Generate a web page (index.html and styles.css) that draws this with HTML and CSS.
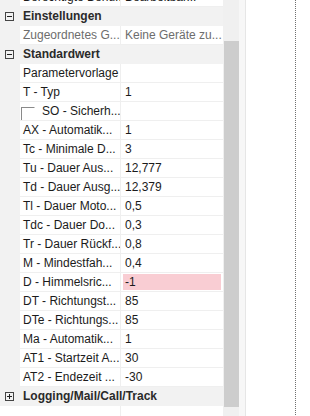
FILE: index.html
```html
<!DOCTYPE html>
<html lang="de">
<head>
  <meta charset="UTF-8" />
  <title>Eigenschaften</title>
  <link rel="stylesheet" href="styles.css">
</head>
<body>
  <div class="window">
    <div class="grid">
      <div class="row">
        <div class="gutter"></div>
        <div class="name">Berechtigte Benu...</div>
        <div class="value">Bearbeitbar...</div>
      </div>

      <div class="category">
        <div class="gutter">
          <svg class="toggle" width="9" height="9" viewBox="0 0 9 9"><rect x="0.5" y="0.5" width="8" height="8" fill="none" stroke="#444"/><path d="M2 4.5h5" stroke="#222"/></svg>
        </div>
        <div class="title">Einstellungen</div>
      </div>
      <div class="row readonly">
        <div class="gutter"></div>
        <div class="name">Zugeordnetes G...</div>
        <div class="value">Keine Geräte zu...</div>
      </div>

      <div class="category">
        <div class="gutter">
          <svg class="toggle" width="9" height="9" viewBox="0 0 9 9"><rect x="0.5" y="0.5" width="8" height="8" fill="none" stroke="#444"/><path d="M2 4.5h5" stroke="#222"/></svg>
        </div>
        <div class="title">Standardwert</div>
      </div>
      <div class="row"><div class="gutter"></div><div class="name">Parametervorlage</div><div class="value"></div></div>
      <div class="row"><div class="gutter"></div><div class="name">T - Typ</div><div class="value">1</div></div>
      <div class="row">
        <div class="gutter"></div>
        <div class="name sub"><span class="check"></span>SO - Sicherh...</div>
        <div class="value"></div>
      </div>
      <div class="row"><div class="gutter"></div><div class="name">AX - Automatik...</div><div class="value">1</div></div>
      <div class="row"><div class="gutter"></div><div class="name">Tc - Minimale D...</div><div class="value">3</div></div>
      <div class="row"><div class="gutter"></div><div class="name">Tu - Dauer Aus...</div><div class="value">12,777</div></div>
      <div class="row"><div class="gutter"></div><div class="name">Td - Dauer Ausg...</div><div class="value">12,379</div></div>
      <div class="row"><div class="gutter"></div><div class="name">Tl - Dauer Moto...</div><div class="value">0,5</div></div>
      <div class="row"><div class="gutter"></div><div class="name">Tdc - Dauer Do...</div><div class="value">0,3</div></div>
      <div class="row"><div class="gutter"></div><div class="name">Tr - Dauer Rückf...</div><div class="value">0,8</div></div>
      <div class="row"><div class="gutter"></div><div class="name">M - Mindestfah...</div><div class="value">0,4</div></div>
      <div class="row"><div class="gutter"></div><div class="name">D - Himmelsric...</div><div class="value"><span class="invalid">-1</span></div></div>
      <div class="row"><div class="gutter"></div><div class="name">DT - Richtungst...</div><div class="value">85</div></div>
      <div class="row"><div class="gutter"></div><div class="name">DTe - Richtungs...</div><div class="value">85</div></div>
      <div class="row"><div class="gutter"></div><div class="name">Ma - Automatik...</div><div class="value">1</div></div>
      <div class="row"><div class="gutter"></div><div class="name">AT1 - Startzeit A...</div><div class="value">30</div></div>
      <div class="row"><div class="gutter"></div><div class="name">AT2 - Endezeit ...</div><div class="value">-30</div></div>

      <div class="category">
        <div class="gutter">
          <svg class="toggle" width="9" height="9" viewBox="0 0 9 9"><rect x="0.5" y="0.5" width="8" height="8" fill="none" stroke="#444"/><path d="M2 4.5h5M4.5 2v5" stroke="#222"/></svg>
        </div>
        <div class="title">Logging/Mail/Call/Track</div>
      </div>
      <div class="row empty"><div class="gutter blank"></div><div class="name"></div><div class="value"></div></div>
    </div>

    <div class="scrollbar">
      <div class="thumb"></div>
    </div>
    <div class="splitter"></div>
    <div class="pane"></div>
  </div>
</body>
</html>
```

FILE: styles.css
```css
:root {
  --band: #f2f2f2;
  --line: #efefef;
  --text: #1b1b1b;
  --muted: #6d6d6d;
}

* {
  box-sizing: border-box;
  margin: 0;
  padding: 0;
}

body {
  font-family: "Segoe UI", "Liberation Sans", Arial, sans-serif;
  font-size: 12px;
  color: var(--text);
  background: #fff;
  overflow: hidden;
}

.window {
  display: flex;
  width: 310px;
  height: 416px;
  overflow: hidden;
}

.grid {
  width: 223px;
  flex-shrink: 0;
  height: 416px;
  overflow: hidden;
  background: #fff;
}

.grid > :first-child {
  margin-top: -12px;
}

.row,
.category {
  display: flex;
  height: 19px;
}

.gutter {
  width: 20px;
  flex-shrink: 0;
  background: var(--band);
  display: flex;
  align-items: center;
  padding-left: 5px;
}

.gutter.blank {
  background: #fff;
}

.name {
  width: 101px;
  flex-shrink: 0;
  padding-left: 3px;
  line-height: 18px;
  border-bottom: 1px solid var(--line);
  border-right: 1px solid var(--line);
  white-space: nowrap;
  overflow: hidden;
}

.name.sub {
  display: flex;
  align-items: flex-start;
  padding-left: 1px;
}

.check {
  width: 14px;
  height: 14px;
  margin: 5px 7px 0 0;
  flex-shrink: 0;
  border-top: 1px solid #8a8a8a;
  border-left: 1px solid #8a8a8a;
  border-right: 1px solid #fff;
  border-bottom: 1px solid #fff;
}

.value {
  flex: 1;
  padding-left: 4px;
  line-height: 18px;
  border-bottom: 1px solid var(--line);
  white-space: nowrap;
  overflow: hidden;
}

.readonly .name,
.readonly .value {
  color: var(--muted);
}

.empty .name,
.empty .value {
  border-bottom: none;
}

.invalid {
  display: block;
  height: 16px;
  line-height: 16px;
  margin: 1px 2px 0 -2px;
  padding-left: 2px;
  background: #f9cdd3;
}

.category {
  background: var(--band);
}

.title {
  padding-left: 3px;
  line-height: 19px;
  font-weight: bold;
  color: #2a2a2a;
  white-space: nowrap;
}

.toggle {
  display: block;
}

.scrollbar {
  width: 16px;
  flex-shrink: 0;
  background: #f0f0f0;
  padding: 41px 0 9px 1px;
}

.thumb {
  height: 100%;
  background: #cdcdcd;
}

.splitter {
  width: 7px;
  flex-shrink: 0;
  background: #f7f7f7;
  border-right: 1px solid #e6e6e6;
}

.pane {
  width: 50px;
  flex-shrink: 0;
  height: 415px;
  border-right: 1px dotted #707070;
}
```
